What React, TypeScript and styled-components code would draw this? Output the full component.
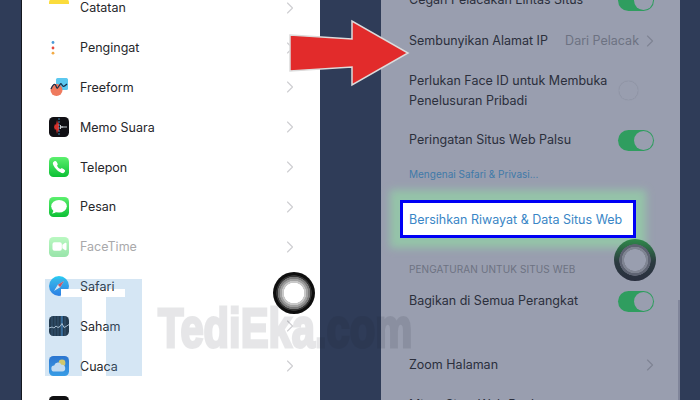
import React from 'react';
import styled, { createGlobalStyle } from 'styled-components';
import { ChevronRight } from 'lucide-react';
import { IoCall, IoVideocam } from 'react-icons/io5';

const GlobalStyle = createGlobalStyle`
  html, body {
    margin: 0;
    padding: 0;
    height: 400px;
    overflow: hidden;
    background: #2f3c58;
  }
`;

const Page = styled.div`
  position: relative;
  display: flex;
  gap: 61px;
  width: 700px;
  height: 400px;
  padding-left: 21px;
  box-sizing: border-box;
  overflow: hidden;
  background: #2f3c58;
  font-family: Inter, 'Noto Sans', sans-serif;
`;

const AppsPanel = styled.div`
  width: 299px;
  height: 400px;
  box-sizing: border-box;
  border-left: 1px solid #14181f;
  background: #fff;
  overflow: hidden;
`;

const AppList = styled.div`
  margin-top: -12px;
`;

const AppRow = styled.div<{ $dim?: boolean }>`
  display: flex;
  align-items: center;
  gap: 11px;
  height: 39.8px;
  padding: 0 20px 0 27px;
  font-size: 12.5px;
  color: ${(p) => (p.$dim ? '#a9a9ab' : '#26272b')};
`;

const AppName = styled.span`
  flex: 1;
`;

const AppIcon = styled.div<{ $bg: string; $round?: boolean; $dim?: boolean }>`
  display: flex;
  align-items: center;
  justify-content: center;
  width: 20px;
  height: 20px;
  flex: none;
  overflow: hidden;
  border-radius: ${(p) => (p.$round ? '50%' : '4.5px')};
  background: ${(p) => p.$bg};
  opacity: ${(p) => (p.$dim ? 0.42 : 1)};
`;

const Arrow = styled(ChevronRight)`
  flex: none;
  color: #cfcfd2;
`;

const SettingsPanel = styled.div`
  position: relative;
  width: 299px;
  height: 400px;
  overflow: hidden;
  background: #999eaf;
  color: #2b2f3c;
  font-size: 12.5px;
`;

const SettingsList = styled.div`
  margin-top: -20px;
  display: flex;
  flex-direction: column;
`;

const SettingRow = styled.div<{ $h?: number; $gapBefore?: number }>`
  display: flex;
  align-items: center;
  justify-content: space-between;
  height: ${(p) => p.$h ?? 40}px;
  margin-top: ${(p) => p.$gapBefore ?? 0}px;
  padding: 0 20px 0 28px;
  flex: none;
  line-height: 20px;
`;

const RowValue = styled.div`
  display: flex;
  align-items: center;
  color: #6d7282;
  gap: 1px;
`;

const Muted = styled(Arrow)`
  color: #7f8493;
`;

const Toggle = styled.div<{ $on?: boolean }>`
  position: relative;
  width: 36px;
  height: 21px;
  margin-right: 6px;
  box-sizing: border-box;
  border-radius: 11px;
  background: ${(p) => (p.$on ? '#2f9d5f' : 'transparent')};

  &::after {
    content: '';
    position: absolute;
    top: 1px;
    ${(p) => (p.$on ? 'right: 1px;' : 'left: 1px;')}
    width: 19px;
    height: 19px;
    border-radius: 50%;
    background: #999eaf;
    box-shadow: ${(p) => (p.$on ? 'none' : '0 0 1px rgba(60, 65, 80, 0.35)')};
  }
`;

const Footnote = styled.div`
  height: 28px;
  flex: none;
  padding-left: 28px;
  line-height: 28px;
  font-size: 10px;
  color: #3f7aa9;
`;

const ClearButton = styled.div`
  display: flex;
  align-items: center;
  height: 38px;
  margin: 12px 0 0 19px;
  width: 236px;
  box-sizing: border-box;
  padding-left: 6px;
  flex: none;
  white-space: nowrap;
  border: 3px solid #0000f5;
  background: #fff;
  color: #3a86c6;
  font-size: 12.5px;
  box-shadow: 0 0 8px 10px #95c4a9;
`;

const SectionHeader = styled.div`
  height: 23px;
  margin-top: 20px;
  flex: none;
  padding-left: 28px;
  line-height: 22px;
  font-size: 10px;
  letter-spacing: 0.1px;
  color: #6d7282;
`;

const ScrollBar = styled.div`
  position: absolute;
  top: 300px;
  right: 0;
  width: 2px;
  height: 100px;
  background: #80859a;
`;

const LogoMark = styled.svg`
  position: absolute;
  left: 45px;
  top: 279px;
`;

const Watermark = styled.div`
  position: absolute;
  left: 158px;
  top: 293px;
  font-family: 'Liberation Sans', sans-serif;
  font-weight: 700;
  font-size: 56px;
  line-height: 70px;
  white-space: nowrap;
  color: #141928;
  opacity: 0.1;
  -webkit-text-stroke: 3px #141928;
  transform: scaleX(0.745);
  transform-origin: left center;
`;

const BigArrow = styled.svg`
  position: absolute;
  left: 285px;
  top: 16px;
`;

const TouchButton = styled.div<{ $x: number; $y: number; $rings: string }>`
  position: absolute;
  left: ${(p) => p.$x - 21}px;
  top: ${(p) => p.$y - 21}px;
  width: 42px;
  height: 42px;
  border-radius: 50%;
  background: ${(p) => p.$rings};
`;

const apps = ['Catatan', 'Pengingat', 'Freeform', 'Memo Suara', 'Telepon', 'Pesan', 'FaceTime', 'Safari', 'Saham', 'Cuaca', 'Terjemahan'];

function iconFor(name: string) {
  switch (name) {
    case 'Catatan':
      return <AppIcon $bg="linear-gradient(#fbdc3c 0 6px, #fff 6px)" />;
    case 'Pengingat':
      return (
        <AppIcon $bg="#fff">
          <svg width="20" height="20" viewBox="0 0 20 20">
            <circle cx="4" cy="4.5" r="1.4" fill="#4a9bd8" />
            <circle cx="4" cy="10" r="1.4" fill="#e6493f" />
            <circle cx="4" cy="15.2" r="1.4" fill="#f2ab45" />
          </svg>
        </AppIcon>
      );
    case 'Freeform':
      return (
        <AppIcon $bg="#fff">
          <svg width="20" height="20" viewBox="0 0 20 20">
            <rect x="7" y="1" width="12" height="12" rx="1.5" fill="#5cc8ef" />
            <circle cx="7.5" cy="13" r="6" fill="#ef7a5e" />
            <path d="M2 12c2-5 4-6 5-3s1 3 3 0 2-3 3-1 2 2 5-1" fill="none" stroke="#17304f" strokeWidth="1.3" />
          </svg>
        </AppIcon>
      );
    case 'Memo Suara':
      return (
        <AppIcon $bg="#111014">
          <svg width="20" height="20" viewBox="0 0 20 20">
            <path d="M2 10h3l1-3 1 1 1-5 1 4 1-2v10l-1-2-1 4-1-5-1 1-1-3H2z" fill="#d8322c" />
            <path d="M11 10h7" stroke="#c8ccd0" strokeWidth="1.2" />
            <path d="M11.5 8v4M13 9v2" stroke="#c8ccd0" strokeWidth="1" />
            <path d="M10 1v18" stroke="#4aa3d8" strokeWidth="0.8" strokeDasharray="2 1" />
          </svg>
        </AppIcon>
      );
    case 'Telepon':
      return (
        <AppIcon $bg="linear-gradient(#5cf06e, #0cc035)">
          <IoCall size={14} color="#fff" />
        </AppIcon>
      );
    case 'Pesan':
      return (
        <AppIcon $bg="linear-gradient(#5cf06e, #0cc035)">
          <svg width="20" height="20" viewBox="0 0 20 20">
            <ellipse cx="10" cy="9.3" rx="7.8" ry="6.3" fill="#fff" />
            <path d="M4.5 13c0 1.600-.8 2.800-1.800 3.500 1.800.1 3.500-.6 4.600-1.700z" fill="#fff" />
          </svg>
        </AppIcon>
      );
    case 'FaceTime':
      return (
        <AppIcon $bg="linear-gradient(#5cf06e, #0cc035)" $dim>
          <IoVideocam size={15} color="#fff" />
        </AppIcon>
      );
    case 'Safari':
      return (
        <AppIcon $bg="linear-gradient(#2ccdf2, #1a74ea)" $round>
          <svg width="20" height="20" viewBox="0 0 20 20">
            <path d="M15 5l-6.200 3.800L5 15l6.200-3.800z" fill="#fff" />
            <path d="M15 5l-6.200 3.800 2.400 2.400z" fill="#ee4040" />
          </svg>
        </AppIcon>
      );
    case 'Saham':
      return (
        <AppIcon $bg="#0f1720">
          <svg width="20" height="20" viewBox="0 0 20 20">
            <path d="M3 0v20M6 0v20M9 0v20M12 0v20M16 0v20" stroke="#33506a" strokeWidth="0.7" />
            <path d="M13 0v20" stroke="#3c8fd8" strokeWidth="1" />
            <path d="M0 12l3-1 2 1 2-2 2 1.500 2-1 2-3 2 4 2-1 3-2" fill="none" stroke="#d4d8dc" strokeWidth="0.9" />
          </svg>
        </AppIcon>
      );
    case 'Cuaca':
      return (
        <AppIcon $bg="linear-gradient(#1b68cf, #2c9cec)">
          <svg width="20" height="20" viewBox="0 0 20 20">
            <circle cx="13" cy="7" r="3.400" fill="#f8d648" />
            <path d="M5.500 15.500a3 3 0 0 1-.3-6 3.800 3.800 0 0 1 7.200-.8 3.400 3.400 0 1 1 .8 6.800z" fill="#e4f0fb" />
          </svg>
        </AppIcon>
      );
    default:
      return <AppIcon $bg="#101012" />;
  }
}

export default function App() {
  return (
    <>
      <GlobalStyle />
      <Page>
        <AppsPanel>
          <AppList>
            {apps.map((name) => (
              <AppRow key={name} $dim={name === 'FaceTime'}>
                {iconFor(name)}
                <AppName>{name}</AppName>
                <Arrow size={20} strokeWidth={1.4} />
              </AppRow>
            ))}
          </AppList>
        </AppsPanel>

        <SettingsPanel>
          <SettingsList>
            <SettingRow>
              Cegah Pelacakan Lintas Situs
              <Toggle $on />
            </SettingRow>
            <SettingRow $gapBefore={1}>
              Sembunyikan Alamat IP
              <RowValue>
                Dari Pelacak
                <Muted size={20} strokeWidth={1.4} />
              </RowValue>
            </SettingRow>
            <SettingRow $h={59}>
              <span>
                Perlukan Face ID untuk Membuka
                <br />
                Penelusuran Pribadi
              </span>
              <Toggle />
            </SettingRow>
            <SettingRow>
              Peringatan Situs Web Palsu
              <Toggle $on />
            </SettingRow>
            <Footnote>Mengenai Safari &amp; Privasi...</Footnote>
            <ClearButton>Bersihkan Riwayat &amp; Data Situs Web</ClearButton>
            <SectionHeader>PENGATURAN UNTUK SITUS WEB</SectionHeader>
            <SettingRow>
              Bagikan di Semua Perangkat
              <Toggle $on />
            </SettingRow>
            <SettingRow $gapBefore={24}>
              Zoom Halaman
              <Muted size={20} strokeWidth={1.4} />
            </SettingRow>
            <SettingRow>Minta Situs Web Desktop</SettingRow>
          </SettingsList>
          <ScrollBar />
        </SettingsPanel>

        <LogoMark width="97" height="97" viewBox="0 0 97 97">
          <path
            fillRule="evenodd"
            d="M0 0h97v97H0zM16 10v8h21v79h24V18h19v-8z"
            fill="rgba(92, 160, 214, 0.26)"
          />
          <rect x="16" y="10" width="17" height="8" fill="#fff" />
        </LogoMark>
        <Watermark>TediEka.com</Watermark>
        <BigArrow width="128" height="74" viewBox="0 0 128 74">
          <path
            d="M5 19l62 4V5l56 32-56 32V51L5 55z"
            fill="#e22b2b"
            stroke="#dcdcdc"
            strokeWidth="1.500"
          />
        </BigArrow>
        <TouchButton
          $x={294}
          $y={292.5}
          $rings="radial-gradient(circle, #fff 0 10px, #c8c8c8 10.500px 12px, #a0a0a0 12.500px 14px, #7a7a7a 14.500px 16px, #333 16.500px 17.500px, #0e0e0e 18px)"
        />
        <TouchButton
          $x={635}
          $y={260}
          $rings="radial-gradient(circle, #999eaf 0 10.500px, #7f8492 11px 13px, #5e6372 13.500px 15.500px, transparent 16px), linear-gradient(#2f8a4a, #2b3a40 55%, #2a2f3f)"
        />
      </Page>
    </>
  );
}
